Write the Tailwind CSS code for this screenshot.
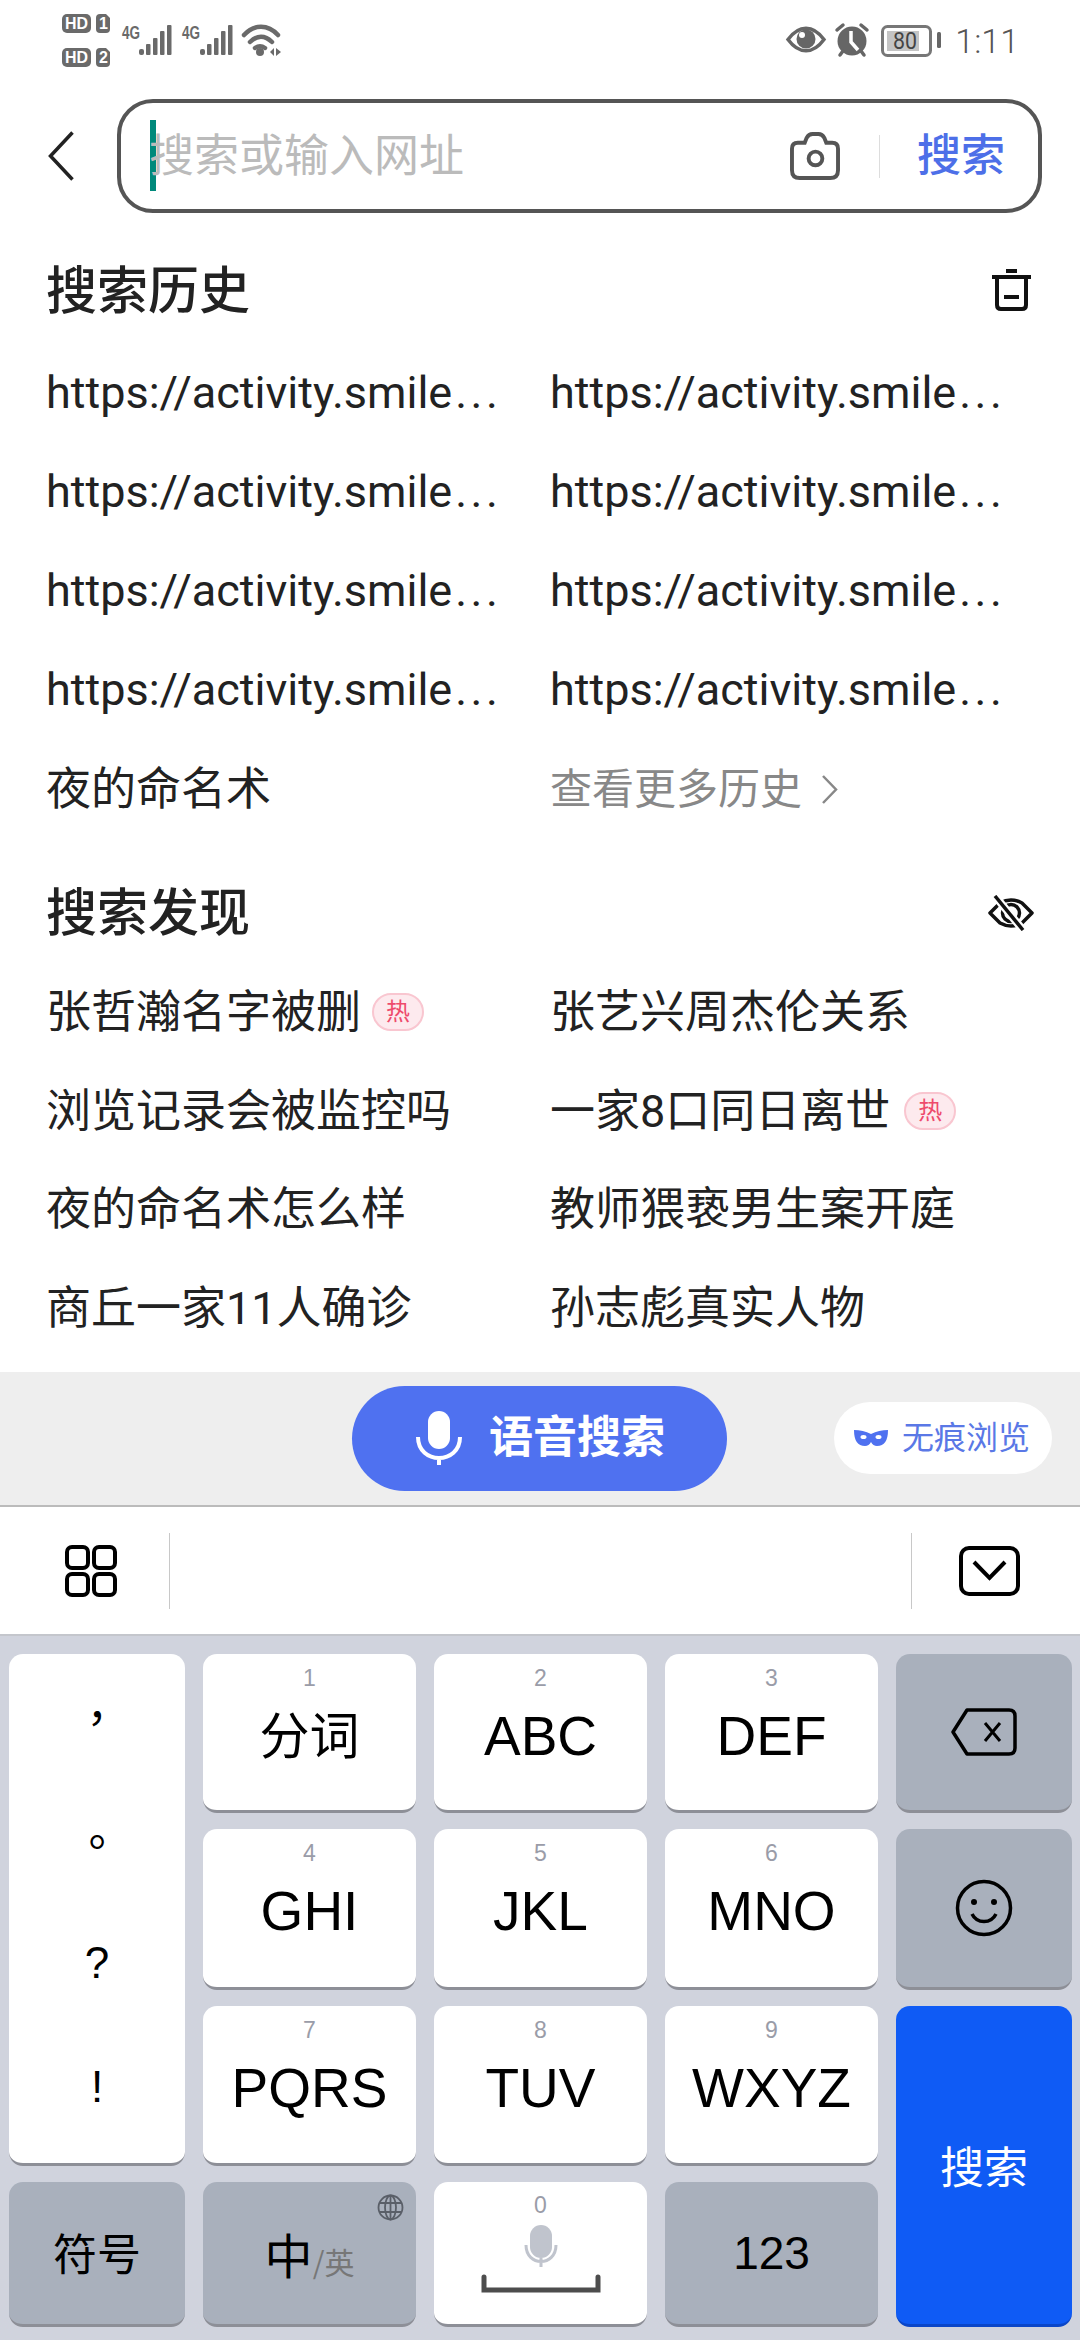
<!doctype html>
<html lang="zh">
<head>
<meta charset="utf-8">
<script src="https://cdn.jsdelivr.net/npm/@tailwindcss/browser@4"></script>
</head>
<body class="w-[1080px] h-[2340px] overflow-hidden bg-white flex flex-col font-['Roboto','Noto_Sans_CJK_SC',sans-serif] text-[#222]">

<!-- status bar -->
<div class="h-[99px] shrink-0 flex justify-between pl-[62px] pr-[61px] pt-[10px]">
  <svg width="220" height="62" viewBox="62 10 220 62" class="block">
    <g fill="#6a6a6a">
      <rect x="62" y="14" width="29" height="19" rx="5"/><path d="M100 14h6l4 4v11q0 4-4 4h-6q-4 0-4-4V18q0-4 4-4z"/>
      <rect x="62" y="48" width="29" height="19" rx="5"/><path d="M100 48h6l4 4v11q0 4-4 4h-6q-4 0-4-4V52q0-4 4-4z"/>
      <rect x="139" y="49" width="5" height="6" rx="2"/><rect x="146" y="44" width="4.500" height="11" rx="1"/><rect x="153" y="38" width="4.500" height="17" rx="1"/><rect x="160" y="31" width="4.500" height="24" rx="1"/><rect x="167" y="25" width="4.500" height="30" rx="1"/>
      <rect x="200" y="49" width="5" height="6" rx="2"/><rect x="207" y="44" width="4.500" height="11" rx="1"/><rect x="214" y="38" width="4.500" height="17" rx="1"/><rect x="221" y="31" width="4.500" height="24" rx="1"/><rect x="228" y="25" width="4.500" height="30" rx="1"/>
      <circle cx="260" cy="52" r="4"/><path d="M270 52l4-4v8zM281 52l-5-4v8z"/>
    </g>
    <g font-family="Liberation Sans" font-weight="700" fill="#fff">
      <text x="65" y="29" font-size="16" textLength="23" lengthAdjust="spacingAndGlyphs">HD</text><text x="99" y="29" font-size="16">1</text>
      <text x="65" y="63" font-size="16" textLength="23" lengthAdjust="spacingAndGlyphs">HD</text><text x="99" y="63" font-size="16">2</text>
    </g>
    <g font-family="Liberation Sans" font-weight="700" fill="#6a6a6a">
      <text x="122" y="39" font-size="18" textLength="18" lengthAdjust="spacingAndGlyphs">4G</text>
      <text x="182" y="39" font-size="18" textLength="18" lengthAdjust="spacingAndGlyphs">4G</text>
    </g>
    <g fill="none" stroke="#6a6a6a" stroke-width="4.500" stroke-linecap="round">
      <path d="M244 35c10-11 24-11 34 0"/><path d="M250 42c7-7 15-7 22 0"/><path d="M255 48c3-2 7-2 10 0"/>
    </g>
  </svg>
  <div class="flex items-start">
    <svg width="160" height="44" viewBox="784 20 160 44" class="block mr-[11px] mt-[10px]">
      <path d="M788 39.500c11-15 25-15 36 0c-11 15-25 15-36 0z" fill="none" stroke="#666" stroke-width="3.500"/>
      <circle cx="806" cy="39" r="9.500" fill="#666"/><circle cx="802" cy="35" r="3" fill="#fff"/>
      <circle cx="852" cy="41" r="14.500" fill="#666"/>
      <path d="M837 30l6-5M867 30l-6-5M840 55l3-4M864 55l-3-4" stroke="#666" stroke-width="3.500" stroke-linecap="round"/>
      <path d="M851 31v11l7 8" stroke="#fff" stroke-width="3.500" fill="none"/>
      <rect x="882.500" y="26.500" width="48" height="29" rx="5" fill="none" stroke="#777" stroke-width="3"/>
      <rect x="887" y="31" width="32" height="20" fill="#c4c4c4"/>
      <rect x="937" y="32" width="4" height="16" rx="1.500" fill="#666"/>
      <text x="893" y="49" font-family="Roboto" font-size="23" fill="#444" textLength="24" lengthAdjust="spacingAndGlyphs">80</text>
    </svg>
    <span class="text-[34px] leading-[44px] font-light text-[#555] mt-[9px]">1:11</span>
  </div>
</div>

<!-- search row -->
<div class="h-[114px] shrink-0 flex items-center pl-[48px] pr-[38px]">
  <svg width="27" height="50" viewBox="0 0 27 50" class="block mr-[42px]"><path d="M24.500 1.500L2.500 25l22 23.500" fill="none" stroke="#222" stroke-width="3.500"/></svg>
  <div class="relative flex-1 h-[114px] border-4 border-[#555] rounded-[36px] flex items-center pl-[28px] pr-[33px]">
    <span class="absolute left-[29px] top-[17px] w-[6px] h-[71px] bg-[#00897b]"></span>
    <span class="text-[45px] leading-none text-[#bbb] flex-1 relative">搜索或输入网址</span>
    <svg width="52" height="48" viewBox="0 0 51 49" class="block mr-[38px]"><path d="M8 11h7l2-5q2-4 6-4h6q4 0 6 4l2 5h6q6 0 6 6v22q0 8-8 8H10q-8 0-8-8V17q0-6 6-6z" fill="none" stroke="#555" stroke-width="4"/><circle cx="26" cy="27" r="7" fill="none" stroke="#555" stroke-width="4"/></svg>
    <span class="w-px h-[43px] bg-[#ddd] mr-[37px]"></span>
    <span class="text-[44px] leading-none text-[#4d6fe8] font-medium">搜索</span>
  </div>
</div>

<!-- history -->
<div class="h-[100px] mt-[28px] shrink-0 flex items-center justify-between pl-[46px] pr-[48px]">
  <span class="text-[51px] leading-none font-medium">搜索历史</span>
  <svg width="40" height="42" viewBox="0 0 40 42" class="block mt-[-2px]"><path d="M0 8h39M14 2h11M5 8v28q0 4 4 4h21q4 0 4-4V8M12 28h15" fill="none" stroke="#111" stroke-width="4"/></svg>
</div>
<div class="grid grid-cols-[452px_450px] gap-x-[52px] auto-rows-[98.7px] items-center pl-[46px] mt-[4.600px] text-[45px] leading-none">
  <div class="whitespace-nowrap pb-[4px]">https://activity.smile<span class="tracking-[3.500px] ml-[3px]">...</span></div><div class="whitespace-nowrap pb-[4px]">https://activity.smile<span class="tracking-[3.500px] ml-[3px]">...</span></div>
  <div class="whitespace-nowrap pb-[4px]">https://activity.smile<span class="tracking-[3.500px] ml-[3px]">...</span></div><div class="whitespace-nowrap pb-[4px]">https://activity.smile<span class="tracking-[3.500px] ml-[3px]">...</span></div>
  <div class="whitespace-nowrap pb-[4px]">https://activity.smile<span class="tracking-[3.500px] ml-[3px]">...</span></div><div class="whitespace-nowrap pb-[4px]">https://activity.smile<span class="tracking-[3.500px] ml-[3px]">...</span></div>
  <div class="whitespace-nowrap pb-[4px]">https://activity.smile<span class="tracking-[3.500px] ml-[3px]">...</span></div><div class="whitespace-nowrap pb-[4px]">https://activity.smile<span class="tracking-[3.500px] ml-[3px]">...</span></div>
  <div>夜的命名术</div>
  <div class="flex items-center text-[42px] text-[#888]">查看更多历史<svg width="17" height="31" viewBox="0 0 17 31" class="block ml-[19px]"><path d="M2 2l13 13.500L2 29" fill="none" stroke="#888" stroke-width="2.500"/></svg></div>
</div>

<!-- discover -->
<div class="h-[100px] mt-[24px] shrink-0 flex items-center justify-between pl-[46px] pr-[46px]">
  <span class="text-[51px] leading-none font-medium">搜索发现</span>
  <svg width="46" height="36" viewBox="0 0 46 36" class="block" fill="none" stroke-width="3.500" stroke-linejoin="round"><path d="M2 18L12 8Q23 2 34 8L44 18L34 28Q23 34 12 28Z" stroke="#111"/><circle cx="23" cy="18" r="8.500" stroke="#111"/><path d="M7 1l28 34" stroke="#fff" stroke-width="8"/><path d="M7 1l28 34" stroke="#111"/></svg>
</div>
<div class="grid grid-cols-[452px_450px] gap-x-[52px] auto-rows-[98.7px] items-center pl-[46px] text-[45px] leading-none">
  <div class="flex items-center">张哲瀚名字被删<span class="ml-[11px] w-[52px] h-[38px] rounded-full bg-[#fdeaee] border-2 border-[#f9c6d0] text-[#ee4a6c] text-[24px] flex items-center justify-center">热</span></div>
  <div>张艺兴周杰伦关系</div>
  <div>浏览记录会被监控吗</div>
  <div class="flex items-center">一家8口同日离世<span class="ml-[14px] w-[52px] h-[38px] rounded-full bg-[#fdeaee] border-2 border-[#f9c6d0] text-[#ee4a6c] text-[24px] flex items-center justify-center">热</span></div>
  <div>夜的命名术怎么样</div>
  <div>教师猥亵男生案开庭</div>
  <div>商丘一家11人确诊</div>
  <div>孙志彪真实人物</div>
</div>
<div class="flex-1"></div>

<!-- voice bar -->
<div class="h-[135px] shrink-0 bg-[#eeeeee] border-b-2 border-[#bbbbbb] flex items-center pl-[352px] pb-[1px]">
  <div class="w-[375px] h-[105px] rounded-full bg-[#4f71f0] flex items-center pl-[64px] gap-[27px] text-white">
    <svg width="46" height="54" viewBox="0 0 46 54" class="block"><rect x="12" y="0" width="22" height="38" rx="11" fill="#fff"/><path d="M2 26c0 28 42 28 42 0M23 46v8" fill="none" stroke="#fff" stroke-width="4"/></svg>
    <span class="text-[44px] leading-none font-bold">语音搜索</span>
  </div>
  <div class="ml-[107px] w-[218px] h-[72px] rounded-full bg-white flex items-center pl-[20px] gap-[14px] text-[32px] leading-none text-[#5a78e6]">
    <svg width="34" height="16" viewBox="0 0 34 16" class="block"><path d="M0 0q9 0 17 4q8-4 17-4q0 16-11 16q-4 0-6-4q-2 4-6 4Q0 16 0 0z" fill="#4f71f0"/><ellipse cx="9.500" cy="7" rx="3" ry="2" fill="#fff"/><ellipse cx="24.500" cy="7" rx="3" ry="2" fill="#fff"/></svg>
    <span>无痕浏览</span>
  </div>
</div>

<!-- toolbar -->
<div class="h-[129px] shrink-0 bg-white border-b-2 border-[#c4c6cc] flex items-center">
  <div class="w-[169px] flex justify-center pl-[13px]">
    <svg width="52" height="52" viewBox="0 0 52 52" class="block" fill="none" stroke="#000" stroke-width="4"><rect x="2" y="2" width="21" height="21" rx="5"/><rect x="29" y="2" width="21" height="21" rx="5"/><rect x="2" y="29" width="21" height="21" rx="5"/><rect x="29" y="29" width="21" height="21" rx="5"/></svg>
  </div>
  <span class="w-px h-[76px] bg-[#c8c8c8]"></span>
  <div class="flex-1"></div>
  <span class="w-px h-[76px] bg-[#c8c8c8]"></span>
  <div class="w-[168px] flex justify-center pr-[13px]">
    <svg width="61" height="50" viewBox="0 0 61 50" class="block" fill="none" stroke="#000" stroke-width="4"><rect x="2" y="2" width="57" height="46" rx="8"/><path d="M15 16l15.500 16L46 16"/></svg>
  </div>
</div>

<!-- keyboard -->
<div class="h-[704px] shrink-0 bg-[#d0d3dd] pt-[18px] px-[9px] grid grid-cols-[176px_213px_213px_213px_176px] gap-x-[18px] gap-y-[16px] grid-rows-[159px_161px_160px_145px] font-['Liberation_Sans','Noto_Sans_CJK_SC',sans-serif] text-black">
  <div class="row-span-3 bg-white rounded-[14px] border-b-[3px] border-[#8d8f97] flex flex-col pb-[14px] text-[44px] leading-none items-center font-['Noto_Sans_CJK_TC',sans-serif]">
    <span class="flex-1 flex items-center">，</span><span class="flex-1 flex items-center">。</span><span class="flex-1 flex items-center font-['Liberation_Sans']">?</span><span class="flex-1 flex items-center font-['Liberation_Sans']">!</span>
  </div>
  <div class="bg-white rounded-[14px] border-b-[3px] border-[#8d8f97] flex flex-col items-center pt-[12px]"><span class="text-[23px] leading-[24px] text-[#9a9ca8]">1</span><span class="text-[50px] leading-[60px] mt-[12px] font-['Noto_Sans_CJK_SC']">分词</span></div>
  <div class="bg-white rounded-[14px] border-b-[3px] border-[#8d8f97] flex flex-col items-center pt-[12px]"><span class="text-[23px] leading-[24px] text-[#9a9ca8]">2</span><span class="text-[55px] leading-[60px] mt-[16px]">ABC</span></div>
  <div class="bg-white rounded-[14px] border-b-[3px] border-[#8d8f97] flex flex-col items-center pt-[12px]"><span class="text-[23px] leading-[24px] text-[#9a9ca8]">3</span><span class="text-[55px] leading-[60px] mt-[16px]">DEF</span></div>
  <div class="bg-[#a9b0bc] rounded-[14px] border-b-[3px] border-[#8d8f97] flex items-center justify-center">
    <svg width="66" height="48" viewBox="0 0 66 48" class="block" fill="none" stroke="#000" stroke-width="3.500"><path d="M16 2h42q6 0 6 6v32q0 6-6 6H16L2 24z" stroke-linejoin="round"/><path d="M34 15l15 18M49 15L34 33" stroke-width="3"/></svg>
  </div>

  <div class="bg-white rounded-[14px] border-b-[3px] border-[#8d8f97] flex flex-col items-center pt-[12px]"><span class="text-[23px] leading-[24px] text-[#9a9ca8]">4</span><span class="text-[55px] leading-[60px] mt-[16px]">GHI</span></div>
  <div class="bg-white rounded-[14px] border-b-[3px] border-[#8d8f97] flex flex-col items-center pt-[12px]"><span class="text-[23px] leading-[24px] text-[#9a9ca8]">5</span><span class="text-[55px] leading-[60px] mt-[16px]">JKL</span></div>
  <div class="bg-white rounded-[14px] border-b-[3px] border-[#8d8f97] flex flex-col items-center pt-[12px]"><span class="text-[23px] leading-[24px] text-[#9a9ca8]">6</span><span class="text-[55px] leading-[60px] mt-[16px]">MNO</span></div>
  <div class="bg-[#a9b0bc] rounded-[14px] border-b-[3px] border-[#8d8f97] flex items-center justify-center">
    <svg width="58" height="58" viewBox="0 0 58 58" class="block" fill="none" stroke="#000" stroke-width="3.500"><circle cx="29" cy="29" r="26.500"/><circle cx="19" cy="23" r="3" fill="#000" stroke="none"/><circle cx="39" cy="23" r="3" fill="#000" stroke="none"/><path d="M17 35c5 10 19 10 24 0"/></svg>
  </div>

  <div class="bg-white rounded-[14px] border-b-[3px] border-[#8d8f97] flex flex-col items-center pt-[12px]"><span class="text-[23px] leading-[24px] text-[#9a9ca8]">7</span><span class="text-[55px] leading-[60px] mt-[16px]">PQRS</span></div>
  <div class="bg-white rounded-[14px] border-b-[3px] border-[#8d8f97] flex flex-col items-center pt-[12px]"><span class="text-[23px] leading-[24px] text-[#9a9ca8]">8</span><span class="text-[55px] leading-[60px] mt-[16px]">TUV</span></div>
  <div class="bg-white rounded-[14px] border-b-[3px] border-[#8d8f97] flex flex-col items-center pt-[12px]"><span class="text-[23px] leading-[24px] text-[#9a9ca8]">9</span><span class="text-[55px] leading-[60px] mt-[16px]">WXYZ</span></div>
  <div class="row-span-2 bg-[#0f5bf5] rounded-[14px] border-b-[3px] border-[#0a46c8] flex items-center justify-center text-white text-[44px] leading-none font-['Noto_Sans_CJK_SC']">搜索</div>

  <div class="bg-[#a9b0bc] rounded-[14px] border-b-[3px] border-[#8d8f97] flex items-center justify-center text-[44px] font-['Noto_Sans_CJK_SC'] pb-[2px]">符号</div>
  <div class="relative bg-[#a9b0bc] rounded-[14px] border-b-[3px] border-[#8d8f97] flex items-center justify-center font-['Noto_Sans_CJK_SC']">
    <span class="text-[48px] leading-none">中</span><span class="text-[30px] leading-none text-[#777] mt-[16px]">/英</span>
    <svg width="27" height="27" viewBox="0 0 27 27" class="absolute right-[12px] top-[12px]" fill="none" stroke="#5a5f68" stroke-width="1.800"><circle cx="13.500" cy="13.500" r="12"/><ellipse cx="13.500" cy="13.500" rx="5.500" ry="12"/><path d="M13.500 1.500v24M2 9h23M2 18h23"/></svg>
  </div>
  <div class="bg-white rounded-[14px] border-b-[3px] border-[#8d8f97] flex flex-col items-center pt-[11px]">
    <span class="text-[23px] leading-[24px] text-[#9a9ca8]">0</span>
    <svg width="120" height="70" viewBox="0 0 120 70" class="block mt-[8px]"><rect x="49" y="0" width="22" height="33" rx="11" fill="#c0c4cd"/><path d="M45 20c0 22 30 22 30 0M60 33v9" fill="none" stroke="#c0c4cd" stroke-width="3"/><path d="M3 52v13h114V52" fill="none" stroke="#4d4d4d" stroke-width="5" stroke-linecap="round"/></svg>
  </div>
  <div class="bg-[#a9b0bc] rounded-[14px] border-b-[3px] border-[#8d8f97] flex items-center justify-center text-[46px]">123</div>
</div>
</body>
</html>
